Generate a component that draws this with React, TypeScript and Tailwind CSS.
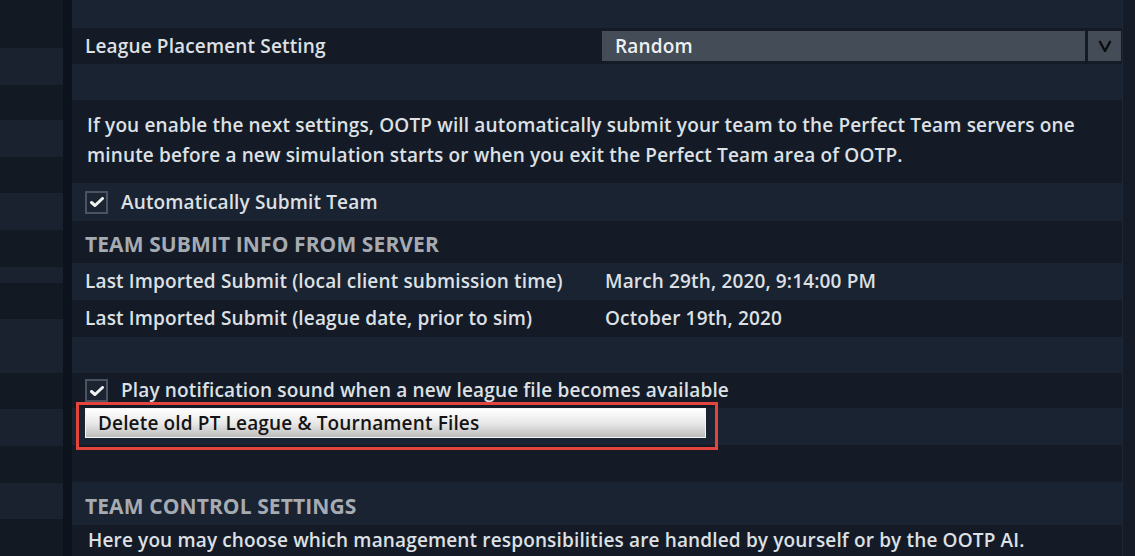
import React from "react";

const sidebarStripes = [48, 37, 35, 37, 36, 37, 37, 16, 36, 54, 36, 37, 37, 36, 37];

const Row = ({
  h,
  dark,
  children,
  className = "",
}: {
  h: string;
  dark?: boolean;
  children?: React.ReactNode;
  className?: string;
}) => (
  <div
    className={`${h} ${dark ? "bg-[#141b27]" : "bg-[#1a2331]"} flex items-center pl-[13px] ${className}`}
  >
    {children}
  </div>
);

const Check = () => (
  <div className="w-[23px] h-[23px] border-2 border-[#4a5362] bg-[#1c2432] flex items-center justify-center mr-[13px]">
    <svg width="14" height="10" viewBox="0 0 14 10">
      <path d="M1.5 5.5 L5 8.5 L12.5 1.5" fill="none" stroke="#f2f2f2" strokeWidth="3" strokeLinecap="round" strokeLinejoin="round" />
    </svg>
  </div>
);

export default function App() {
  return (
    <div className="w-[1135px] h-[556px] overflow-hidden flex bg-[#141b27] font-['Open_Sans',sans-serif] font-semibold text-[19px] text-[#dde0e4] tracking-[0.15px]">
      <div className="w-[63px] flex flex-col">
        {sidebarStripes.map((s, i) => (
          <div
            key={i}
            style={{ height: s }}
            className={i % 2 === 0 ? "bg-[#121923] shrink-0" : "bg-[#1a2230] shrink-0"}
          />
        ))}
      </div>
      <div className="w-[9px] bg-[#0d131c]" />

      <div className="flex-1 flex flex-col">
        <Row h="h-[28px]" />
        <Row h="h-[36px]" dark className="justify-between pr-[1px]">
          <span>League Placement Setting</span>
          <div className="flex gap-[3px] h-[30px]">
            <div className="w-[483px] bg-[#434c57] flex items-center pl-[13px] text-[#eef0f2]">Random</div>
            <div className="w-[33px] bg-[#434c57] flex items-center justify-center">
              <svg width="14" height="12" viewBox="0 0 14 12">
                <path d="M1.5 1 L7 11 L12.5 1" fill="none" stroke="#0b0d10" strokeWidth="2.4" />
              </svg>
            </div>
          </div>
        </Row>
        <Row h="h-[36px]" />
        <Row h="h-[83px]" dark className="pl-[15px] pb-[4px]">
          <p className="leading-[30px]">
            If you enable the next settings, OOTP will automatically submit your team to the Perfect Team servers one
            <br />
            minute before a new simulation starts or when you exit the Perfect Team area of OOTP.
          </p>
        </Row>
        <Row h="h-[38px]">
          <Check />
          <span>Automatically Submit Team</span>
        </Row>
        <Row h="h-[42px]" dark className="pt-[5px]">
          <span className="text-[21px] font-bold text-[#a6abb2] tracking-[0.1px]">TEAM SUBMIT INFO FROM SERVER</span>
        </Row>
        <Row h="h-[37px]">
          <span className="w-[520px]">Last Imported Submit (local client submission time)</span>
          <span>March 29th, 2020, 9:14:00 PM</span>
        </Row>
        <Row h="h-[37px]" dark>
          <span className="w-[520px]">Last Imported Submit (league date, prior to sim)</span>
          <span>October 19th, 2020</span>
        </Row>
        <Row h="h-[36px]" />
        <Row h="h-[35px]" dark>
          <Check />
          <span>Play notification sound when a new league file becomes available</span>
        </Row>
        <Row h="h-[37px]" className="items-start pl-[12px]">
          <div className="relative">
            <button className="w-[621px] h-[30px] text-left pl-[12px] bg-gradient-to-b from-[#ffffff] via-[#e9e9e9] to-[#bdbdbd] border border-[#f4f4f4] text-[#141414] text-[19px] font-semibold">
              Delete old PT League &amp; Tournament Files
            </button>
            <div className="absolute left-[-9px] top-[-6px] right-[-12px] bottom-[-12px] border-[3px] border-[#e5443d]" />
          </div>
        </Row>
        <Row h="h-[37px]" dark />
        <Row h="h-[43px]" className="pt-[6px]">
          <span className="text-[21px] font-bold text-[#a6abb2] tracking-[0.1px]">TEAM CONTROL SETTINGS</span>
        </Row>
        <Row h="h-[31px]" dark className="pl-[16px] items-start pt-[1px]">
          <span>Here you may choose which management responsibilities are handled by yourself or by the OOTP AI.</span>
        </Row>
      </div>
      <div className="w-[13px] bg-[#151c27] border-l border-[#1e2735]" />
    </div>
  );
}
